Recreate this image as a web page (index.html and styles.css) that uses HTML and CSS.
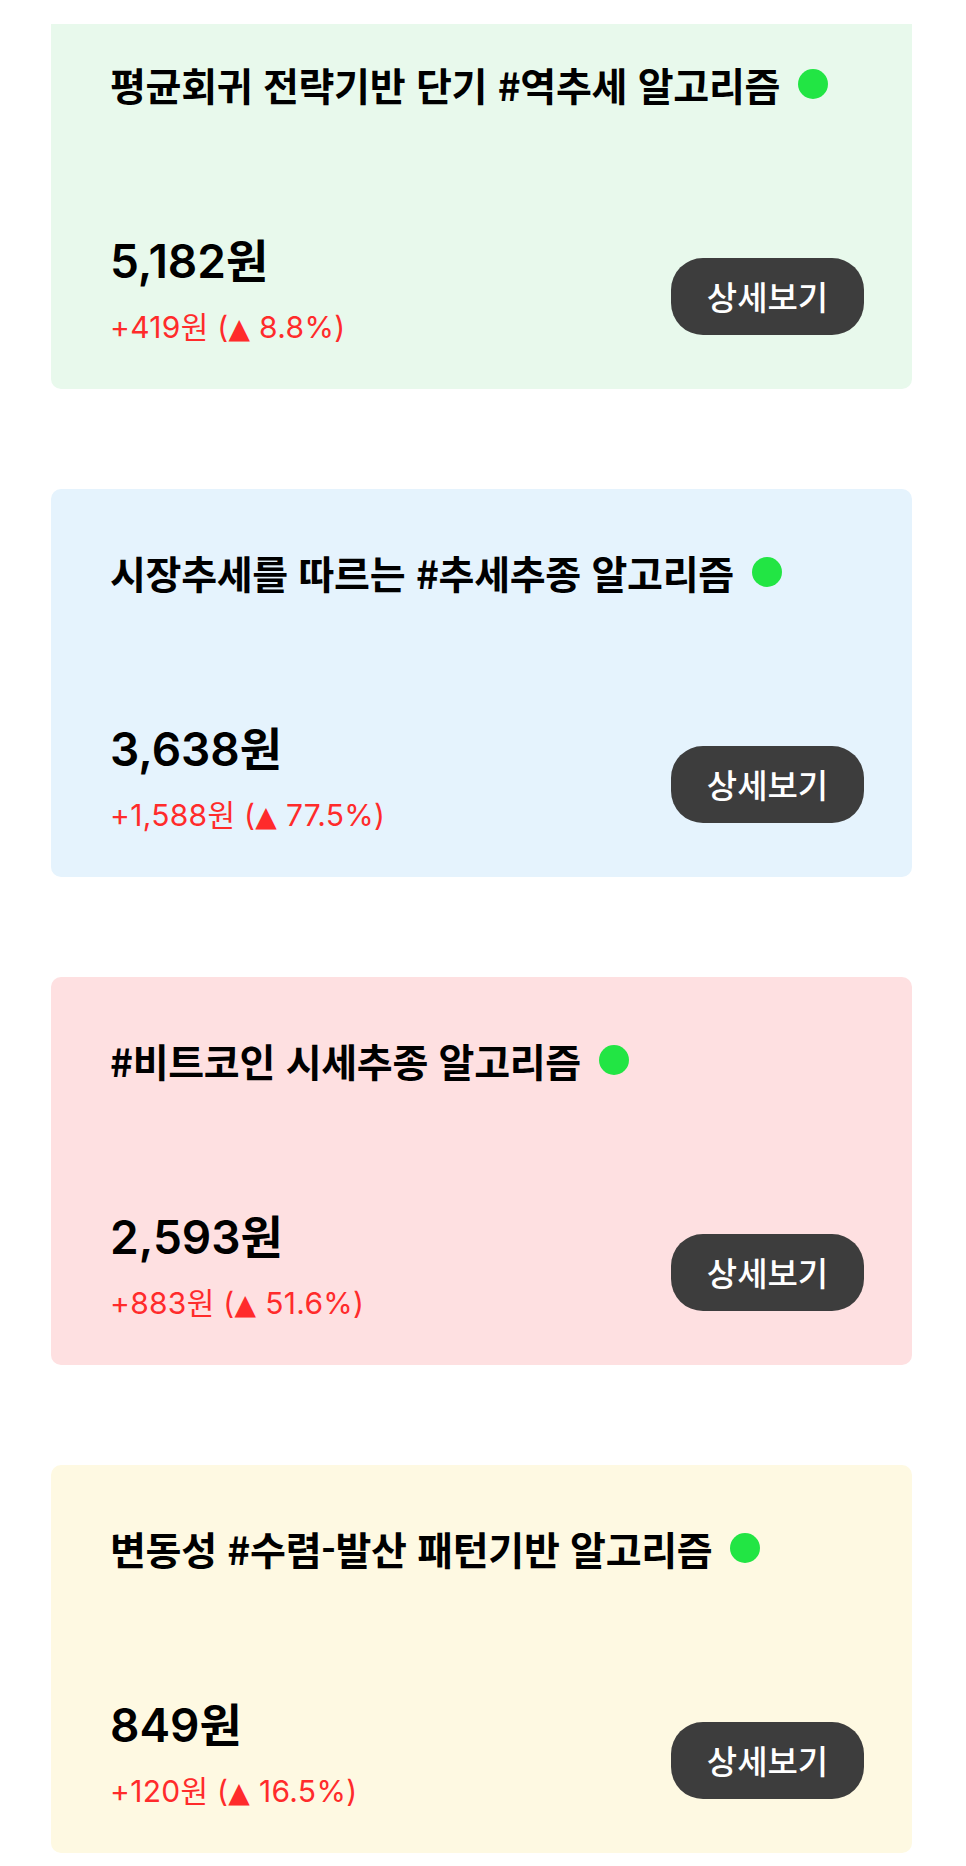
FILE: index.html
```html
<!DOCTYPE html>
<html lang="ko">
<head>
  <meta charset="UTF-8" />
  <meta name="viewport" content="width=device-width, initial-scale=1.0"/>
  <title>알고리즘 목록</title>
  <link rel="stylesheet" href="styles.css">
</head>
<body>
  <div class="topbar"></div>

  <main class="list">
    <!-- 평균회귀 -->
    <section class="card card-green">
      <div class="card-title">
        <h2>평균회귀 전략기반 단기 #역추세 알고리즘</h2>
        <span class="live-dot"></span>
      </div>
      <div class="card-bottom">
        <div class="price-box">
          <p class="price">5,182원</p>
          <p class="change">+419원 (<span class="up">▲</span> 8.8%)</p>
        </div>
        <button class="detail-btn">상세보기</button>
      </div>
    </section>

    <!-- 추세추종 -->
    <section class="card card-blue">
      <div class="card-title">
        <h2>시장추세를 따르는 #추세추종 알고리즘</h2>
        <span class="live-dot"></span>
      </div>
      <div class="card-bottom">
        <div class="price-box">
          <p class="price">3,638원</p>
          <p class="change">+1,588원 (<span class="up">▲</span> 77.5%)</p>
        </div>
        <button class="detail-btn">상세보기</button>
      </div>
    </section>

    <!-- 비트코인 -->
    <section class="card card-pink">
      <div class="card-title">
        <h2>#비트코인 시세추종 알고리즘</h2>
        <span class="live-dot"></span>
      </div>
      <div class="card-bottom">
        <div class="price-box">
          <p class="price">2,593원</p>
          <p class="change">+883원 (<span class="up">▲</span> 51.6%)</p>
        </div>
        <button class="detail-btn">상세보기</button>
      </div>
    </section>

    <!-- 변동성 -->
    <section class="card card-yellow">
      <div class="card-title">
        <h2>변동성 #수렴-발산 패턴기반 알고리즘</h2>
        <span class="live-dot"></span>
      </div>
      <div class="card-bottom">
        <div class="price-box">
          <p class="price">849원</p>
          <p class="change">+120원 (<span class="up">▲</span> 16.5%)</p>
        </div>
        <button class="detail-btn">상세보기</button>
      </div>
    </section>
  </main>
</body>
</html>
```

FILE: styles.css
```css
body {
  margin: 0;
  background: #fff;
  font-family: Inter, "Noto Sans CJK KR", sans-serif;
  color: #000;
}
.topbar {
  position: fixed;
  top: 0;
  left: 0;
  right: 0;
  height: 24px;
  background: #fff;
  z-index: 10;
}
.list {
  display: flex;
  flex-direction: column;
  gap: 100px;
  padding: 1px 54px 0 51px;
}
.card {
  height: 388px;
  box-sizing: border-box;
  padding: 63px 48px 42px 59px;
  border-radius: 10px;
  display: flex;
  flex-direction: column;
  justify-content: space-between;
}
.card-green { background: #e8f9ec; }
.card-blue { background: #e5f3fd; }
.card-pink { background: #fee0e1; }
.card-yellow { background: #fef9e2; }

.card-title {
  display: flex;
  align-items: center;
  gap: 18px;
}
.card-title h2 {
  margin: 0;
  font-family: "Noto Sans CJK KR", sans-serif;
  font-size: 39px;
  font-weight: 700;
  line-height: 40px;
  letter-spacing: -0.3px;
}
.live-dot {
  width: 30px;
  height: 30px;
  border-radius: 50%;
  background: #22e544;
}
.card-bottom {
  display: flex;
  align-items: center;
  justify-content: space-between;
}
.price-box p {
  margin: 0;
}
.price {
  font-size: 46px;
  font-weight: 600;
  line-height: 54px;
}
.change {
  margin-top: 21px !important;
  font-size: 30px;
  line-height: 36px;
  letter-spacing: 0.3px;
  color: #ff2b2b;
}
.up {
  font-family: "DejaVu Sans", sans-serif;
  font-size: 28px;
}
.detail-btn {
  margin-top: 11px;
  width: 193px;
  height: 77px;
  border: none;
  border-radius: 32px;
  background: #3d3d3d;
  color: #fff;
  font-family: "Noto Sans CJK KR", sans-serif;
  font-size: 33px;
  font-weight: 500;
  cursor: pointer;
}
```
